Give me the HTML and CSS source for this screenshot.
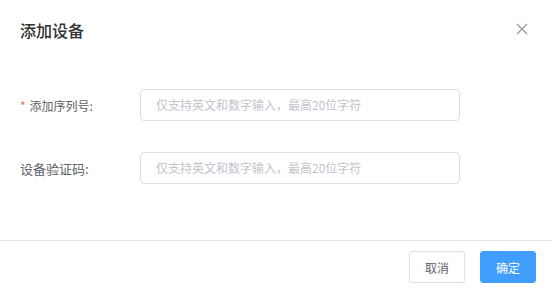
FILE: index.html
```html
<!DOCTYPE html>
<html lang="zh-CN">
<head>
<meta charset="utf-8">
<link rel="stylesheet" href="styles.css">
</head>
<body>
<div class="dialog">
  <div class="header">
    <span class="title">添加设备</span>
    <svg class="close" width="12" height="12" viewBox="0 0 12 12"><path d="M1 1L11 11M11 1L1 11" stroke="#909399" stroke-width="1.1" fill="none"/></svg>
  </div>
  <div class="body">
    <div class="row">
      <label class="label"><span class="req">*</span><span class="narrow">添加序列号:</span></label>
      <div class="input">仅支持英文和数字输入，最高20位字符</div>
    </div>
    <div class="row">
      <label class="label">设备验证码:</label>
      <div class="input">仅支持英文和数字输入，最高20位字符</div>
    </div>
  </div>
  <div class="footer">
    <button class="btn">取消</button>
    <button class="btn primary">确定</button>
  </div>
  <div class="watermark">3478858</div>
</div>
</body>
</html>
```
FILE: styles.css
```css
* { box-sizing: border-box; }
html, body { margin: 0; padding: 0; background: #fff; }
body { font-family: "Noto Sans CJK SC", "Noto Sans", sans-serif; }
.dialog { position: relative; width: 552px; height: 293px; overflow: hidden; background: #fff; }
.header { display: flex; justify-content: space-between; align-items: center; padding: 18px 24px 0 20px; height: 42px; }
.title { font-size: 16px; line-height: 24px; color: #303133; font-weight: 500; }
.close { margin-top: -2px; }
.body { padding: 47px 0 56px 20px; display: flex; flex-direction: column; gap: 31px; }
.row { display: flex; align-items: center; height: 32px; }
.label { width: 120px; font-size: 13px; color: #606266; display: flex; align-items: center; }
.narrow { font-size: 12px; }
.req { color: #f56c6c; margin-right: 4px; font-size: 12px; }
.input { width: 320px; height: 32px; border: 1px solid #dcdfe6; border-radius: 4px; padding: 0 15px; font-size: 12px; line-height: 30px; color: #c0c4cc; }
.footer { border-top: 1px solid #e4e7ed; padding: 10px 16px 10px; display: flex; justify-content: flex-end; gap: 15px; }
.btn { width: 56px; height: 32px; border: 1px solid #dcdfe6; border-radius: 3px; background: #fff; color: #606266; font-family: inherit; font-size: 12px; padding: 0; }
.btn.primary { background: #409eff; border-color: #409eff; color: #fff; }
.watermark { position: absolute; left: 315px; top: 272px; transform: rotate(-60deg); transform-origin: left top; font-size: 38px; line-height: 38px; color: rgba(0,0,0,0.018); font-family: "Liberation Sans", sans-serif; white-space: nowrap; pointer-events: none; }
```
